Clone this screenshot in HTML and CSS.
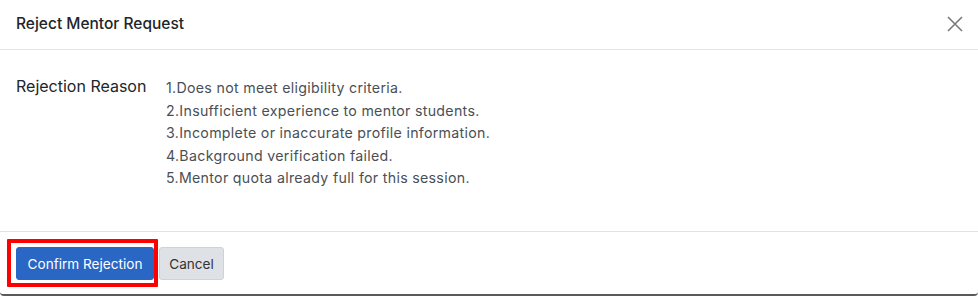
FILE: index.html
```html
<!DOCTYPE html>
<html>
<head>
<meta charset="utf-8">
<link rel="stylesheet" href="styles.css">
</head>
<body>
<div class="modal">
  <div class="modal-header">
    <h5 class="modal-title">Reject Mentor Request</h5>
    <button class="close" aria-label="Close">
      <svg width="16" height="16" viewBox="0 0 16 16"><path d="M1 1L15 15M15 1L1 15" stroke="#7a7a7a" stroke-width="1.6" fill="none"/></svg>
    </button>
  </div>
  <div class="modal-body">
    <div class="label">Rejection Reason</div>
    <div class="reasons">
      <div>1.Does not meet eligibility criteria.</div>
      <div>2.Insufficient experience to mentor students.</div>
      <div>3.Incomplete or inaccurate profile information.</div>
      <div>4.Background verification failed.</div>
      <div>5.Mentor quota already full for this session.</div>
    </div>
  </div>
  <div class="modal-footer">
    <span class="highlight"><button class="btn btn-primary">Confirm Rejection</button></span>
    <button class="btn btn-secondary">Cancel</button>
  </div>
</div>
</body>
</html>
```

FILE: styles.css
```css
* { box-sizing: border-box; }
html, body { margin: 0; background: #fff; }
body {
  font-family: Inter, "Noto Sans", sans-serif;
  color: #212529;
  width: 978px;
  height: 296px;
  overflow: hidden;
}
.modal {
  width: 978px;
  background: #fff;
  border-bottom: 2px solid #5a5a5a;
  border-radius: 0 0 4px 4px;
}
.modal-header {
  display: flex;
  align-items: center;
  justify-content: space-between;
  height: 50px;
  padding: 0 15px 2px 16px;
  border-bottom: 1px solid #e2e2ea;
}
.modal-title {
  margin: 0;
  font-size: 15.5px;
  font-weight: 500;
  line-height: 24px;
  color: #212529;
}
.close {
  border: 0;
  background: none;
  padding: 0;
  width: 16px;
  height: 16px;
  display: flex;
}
.modal-body {
  display: flex;
  padding: 27px 16px 42px 16px;
  height: 181px;
}
.label {
  width: 150px;
  flex: none;
  font-size: 16px;
  line-height: 18px;
  color: #212529;
}
.reasons {
  font-size: 14.2px;
  letter-spacing: 0.3px;
  line-height: 22.5px;
  color: #4a4f55;
}
.modal-footer {
  display: flex;
  align-items: center;
  border-top: 1px solid #e2e2e6;
  padding: 7px;
}
.highlight {
  display: flex;
  border: 4px solid #f00;
  border-radius: 1px;
  padding: 4px 0 3px 5px;
}
.btn {
  font-family: Inter, "Noto Sans", sans-serif;
  font-size: 13.6px;
  line-height: 20px;
  height: 33px;
  padding: 6px 0;
  border-radius: 3px;
  white-space: nowrap;
  text-align: center;
  cursor: pointer;
}
.btn-primary {
  background: #2a66c4;
  border: 1px solid #2a66c4;
  color: #fff;
  width: 138px;
}
.btn-secondary {
  margin-left: 1px;
  background: #dee1e5;
  border: 1px solid #cfd2d6;
  color: #333;
  width: 65px;
}
```
